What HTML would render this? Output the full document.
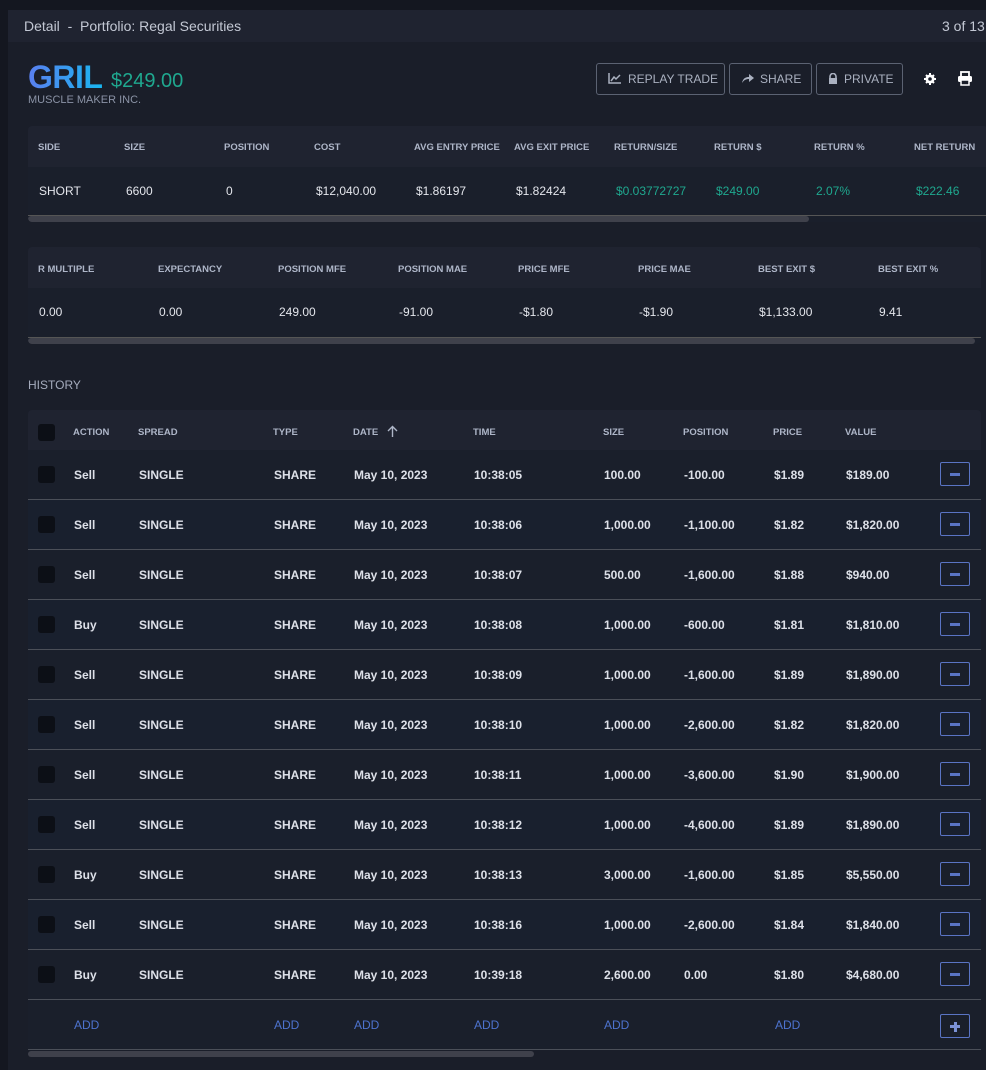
<!DOCTYPE html>
<html><head><meta charset="utf-8"><style>
*{margin:0;padding:0;box-sizing:border-box}
body{width:986px;height:1058px;overflow:hidden;background:#141720;font-family:"Liberation Sans",sans-serif;position:relative;color:#e6e8ee}
.panel{position:absolute;left:8px;top:10px;width:990px;height:1060px;background:#1a1e29}
.hdr{position:absolute;left:8px;top:10px;width:990px;height:32px;background:#1f2330;font-size:14px;color:#c3c8d4}
.a{position:absolute;white-space:nowrap}
.tb{position:absolute;left:28px;background:#1a1f2b;border-radius:4px;overflow:hidden}
.th{position:absolute;left:0;right:0;top:0;background:#1f2330}
.hl{font-size:9.5px;font-weight:bold;color:#aeb6c8}
.v{font-size:12px;color:#e4e6ec}
.g{color:#1fa88f}
.btn{position:absolute;top:63px;height:32px;border:1px solid #5b6272;border-radius:3px;color:#aab1c0;font-size:12px;line-height:30px;padding-left:11px}
.row{position:absolute;left:28px;width:953px;height:50px;border-bottom:1px solid #4b4f58;font-size:12px;font-weight:bold;color:#dde0e8}
.row span{position:absolute;top:18px;white-space:nowrap}
.cb{position:absolute;left:10px;top:16px;width:17px;height:17px;background:#0c0f16;border-radius:3px}
.mb{position:absolute;left:912px;top:12px;width:30px;height:24px;border:1px solid #5a74c4;border-radius:2px}
.mb:after{content:"";position:absolute;left:9px;top:10px;width:10px;height:3px;background:#5a74c4}
.add{color:#4d73cf}
.sb{position:absolute;height:6px;background:#3f414b;border-radius:3px}
</style></head><body>
<div class="panel"></div>
<div class="hdr"><span class="a" style="left:16px;top:8px">Detail &nbsp;- &nbsp;Portfolio: Regal Securities</span><span class="a" style="left:934px;top:8px">3 of 13</span></div>

<div class="a" style="left:28px;top:59px;font-size:32px;font-weight:bold;letter-spacing:-0.5px;background:linear-gradient(90deg,#5a7ff0,#19b6f0);-webkit-background-clip:text;color:transparent">GRIL</div>
<div class="a" style="left:111px;top:70px;font-size:20px;color:#1fa88f">$249.00</div>
<div class="a" style="left:28px;top:94px;font-size:11px;color:#8b93a6">MUSCLE MAKER INC.</div>

<div class="btn" style="left:596px;width:129px"><svg width="14" height="12" style="vertical-align:-1px;margin-right:6px"><path d="M1 1V11H13M3 9L6 5L8 7L12 3" stroke="#aab1c0" stroke-width="1.5" fill="none"/></svg>REPLAY TRADE</div>
<div class="btn" style="left:729px;width:83px"><svg width="13" height="11" style="vertical-align:-1px;margin-right:6px"><path d="M1 10C2 5 5 4 8 4V1L13 5L8 9V6C5 6 3 7 1 10Z" fill="#aab1c0"/></svg>SHARE</div>
<div class="btn" style="left:816px;width:87px"><svg width="10" height="11" style="vertical-align:-1px;margin-right:6px"><path d="M2 5V3.5A3 3 0 0 1 8 3.5V5" stroke="#aab1c0" stroke-width="1.6" fill="none"/><rect x="1" y="5" width="8" height="6" fill="#aab1c0"/></svg>PRIVATE</div>
<svg class="a" style="left:924px;top:73px" width="12" height="12"><circle cx="6" cy="6" r="4.5" fill="#fff"/><path d="M6 0V12M0 6H12M2 2L10 10M10 2L2 10" stroke="#fff" stroke-width="2"/><circle cx="6" cy="6" r="1.8" fill="#1a1e29"/></svg>
<svg class="a" style="left:957px;top:71px" width="16" height="15"><rect x="4" y="1" width="8" height="5" fill="none" stroke="#fff" stroke-width="1.8"/><rect x="1" y="5" width="14" height="6" rx="1.5" fill="#fff"/><rect x="4" y="9" width="8" height="5" fill="#1a1e29" stroke="#fff" stroke-width="1.5"/></svg>

<div class="tb" style="top:126px;width:960px;height:96px">
<div class="th" style="height:41px"></div>
<span class="a hl" style="left:10px;top:16px">SIDE</span><span class="a hl" style="left:96px;top:16px">SIZE</span><span class="a hl" style="left:196px;top:16px">POSITION</span><span class="a hl" style="left:286px;top:16px">COST</span><span class="a hl" style="left:386px;top:16px">AVG ENTRY PRICE</span><span class="a hl" style="left:486px;top:16px">AVG EXIT PRICE</span><span class="a hl" style="left:586px;top:16px">RETURN/SIZE</span><span class="a hl" style="left:686px;top:16px">RETURN $</span><span class="a hl" style="left:786px;top:16px">RETURN %</span><span class="a hl" style="left:886px;top:16px">NET RETURN</span>
<span class="a v" style="left:11px;top:58px">SHORT</span><span class="a v" style="left:98px;top:58px">6600</span><span class="a v" style="left:198px;top:58px">0</span><span class="a v" style="left:288px;top:58px">$12,040.00</span><span class="a v" style="left:388px;top:58px">$1.86197</span><span class="a v" style="left:488px;top:58px">$1.82424</span><span class="a v g" style="left:588px;top:58px">$0.03772727</span><span class="a v g" style="left:688px;top:58px">$249.00</span><span class="a v g" style="left:788px;top:58px">2.07%</span><span class="a v g" style="left:888px;top:58px">$222.46</span>
<div style="position:absolute;left:0;right:0;top:89px;height:1px;background:#555"></div>
<div class="sb" style="left:0;top:90px;width:781px"></div>
</div>

<div class="tb" style="top:247px;width:953px;height:97px">
<div class="th" style="height:41px"></div>
<span class="a hl" style="left:10px;top:17px">R MULTIPLE</span><span class="a hl" style="left:130px;top:17px">EXPECTANCY</span><span class="a hl" style="left:250px;top:17px">POSITION MFE</span><span class="a hl" style="left:370px;top:17px">POSITION MAE</span><span class="a hl" style="left:490px;top:17px">PRICE MFE</span><span class="a hl" style="left:610px;top:17px">PRICE MAE</span><span class="a hl" style="left:730px;top:17px">BEST EXIT $</span><span class="a hl" style="left:850px;top:17px">BEST EXIT %</span>
<span class="a v" style="left:11px;top:58px">0.00</span><span class="a v" style="left:131px;top:58px">0.00</span><span class="a v" style="left:251px;top:58px">249.00</span><span class="a v" style="left:371px;top:58px">-91.00</span><span class="a v" style="left:491px;top:58px">-$1.80</span><span class="a v" style="left:611px;top:58px">-$1.90</span><span class="a v" style="left:731px;top:58px">$1,133.00</span><span class="a v" style="left:851px;top:58px">9.41</span>
<div style="position:absolute;left:0;right:0;top:90px;height:1px;background:#555"></div>
<div class="sb" style="left:0;top:91px;width:947px"></div>
</div>

<div class="a" style="left:28px;top:378px;font-size:12px;color:#a5acbd">HISTORY</div>

<div class="a" style="left:28px;top:410px;width:953px;height:41px;background:#1f2330;border-radius:4px 4px 0 0"></div>
<div class="a" style="left:38px;top:424px;width:17px;height:17px;background:#0c0f16;border-radius:3px"></div>
<span class="a hl" style="left:73px;top:427px">ACTION</span><span class="a hl" style="left:138px;top:427px">SPREAD</span><span class="a hl" style="left:273px;top:427px">TYPE</span><span class="a hl" style="left:353px;top:427px">DATE</span>
<svg class="a" style="left:387px;top:425px" width="11" height="12"><path d="M5.5 12V2M1 6L5.5 1.5L10 6" stroke="#aeb6c8" stroke-width="1.4" fill="none"/></svg>
<span class="a hl" style="left:473px;top:427px">TIME</span><span class="a hl" style="left:603px;top:427px">SIZE</span><span class="a hl" style="left:683px;top:427px">POSITION</span><span class="a hl" style="left:773px;top:427px">PRICE</span><span class="a hl" style="left:845px;top:427px">VALUE</span>

<div class="row" style="top:450px;background:#1a1f2b"><div class="cb"></div><span style="left:46px">Sell</span><span style="left:111px">SINGLE</span><span style="left:246px">SHARE</span><span style="left:326px">May 10, 2023</span><span style="left:446px">10:38:05</span><span style="left:576px">100.00</span><span style="left:656px">-100.00</span><span style="left:746px">$1.89</span><span style="left:818px">$189.00</span><div class="mb"></div></div>
<div class="row" style="top:500px;background:#19202e"><div class="cb"></div><span style="left:46px">Sell</span><span style="left:111px">SINGLE</span><span style="left:246px">SHARE</span><span style="left:326px">May 10, 2023</span><span style="left:446px">10:38:06</span><span style="left:576px">1,000.00</span><span style="left:656px">-1,100.00</span><span style="left:746px">$1.82</span><span style="left:818px">$1,820.00</span><div class="mb"></div></div>
<div class="row" style="top:550px;background:#1a1f2b"><div class="cb"></div><span style="left:46px">Sell</span><span style="left:111px">SINGLE</span><span style="left:246px">SHARE</span><span style="left:326px">May 10, 2023</span><span style="left:446px">10:38:07</span><span style="left:576px">500.00</span><span style="left:656px">-1,600.00</span><span style="left:746px">$1.88</span><span style="left:818px">$940.00</span><div class="mb"></div></div>
<div class="row" style="top:600px;background:#19202e"><div class="cb"></div><span style="left:46px">Buy</span><span style="left:111px">SINGLE</span><span style="left:246px">SHARE</span><span style="left:326px">May 10, 2023</span><span style="left:446px">10:38:08</span><span style="left:576px">1,000.00</span><span style="left:656px">-600.00</span><span style="left:746px">$1.81</span><span style="left:818px">$1,810.00</span><div class="mb"></div></div>
<div class="row" style="top:650px;background:#1a1f2b"><div class="cb"></div><span style="left:46px">Sell</span><span style="left:111px">SINGLE</span><span style="left:246px">SHARE</span><span style="left:326px">May 10, 2023</span><span style="left:446px">10:38:09</span><span style="left:576px">1,000.00</span><span style="left:656px">-1,600.00</span><span style="left:746px">$1.89</span><span style="left:818px">$1,890.00</span><div class="mb"></div></div>
<div class="row" style="top:700px;background:#19202e"><div class="cb"></div><span style="left:46px">Sell</span><span style="left:111px">SINGLE</span><span style="left:246px">SHARE</span><span style="left:326px">May 10, 2023</span><span style="left:446px">10:38:10</span><span style="left:576px">1,000.00</span><span style="left:656px">-2,600.00</span><span style="left:746px">$1.82</span><span style="left:818px">$1,820.00</span><div class="mb"></div></div>
<div class="row" style="top:750px;background:#1a1f2b"><div class="cb"></div><span style="left:46px">Sell</span><span style="left:111px">SINGLE</span><span style="left:246px">SHARE</span><span style="left:326px">May 10, 2023</span><span style="left:446px">10:38:11</span><span style="left:576px">1,000.00</span><span style="left:656px">-3,600.00</span><span style="left:746px">$1.90</span><span style="left:818px">$1,900.00</span><div class="mb"></div></div>
<div class="row" style="top:800px;background:#19202e"><div class="cb"></div><span style="left:46px">Sell</span><span style="left:111px">SINGLE</span><span style="left:246px">SHARE</span><span style="left:326px">May 10, 2023</span><span style="left:446px">10:38:12</span><span style="left:576px">1,000.00</span><span style="left:656px">-4,600.00</span><span style="left:746px">$1.89</span><span style="left:818px">$1,890.00</span><div class="mb"></div></div>
<div class="row" style="top:850px;background:#1a1f2b"><div class="cb"></div><span style="left:46px">Buy</span><span style="left:111px">SINGLE</span><span style="left:246px">SHARE</span><span style="left:326px">May 10, 2023</span><span style="left:446px">10:38:13</span><span style="left:576px">3,000.00</span><span style="left:656px">-1,600.00</span><span style="left:746px">$1.85</span><span style="left:818px">$5,550.00</span><div class="mb"></div></div>
<div class="row" style="top:900px;background:#19202e"><div class="cb"></div><span style="left:46px">Sell</span><span style="left:111px">SINGLE</span><span style="left:246px">SHARE</span><span style="left:326px">May 10, 2023</span><span style="left:446px">10:38:16</span><span style="left:576px">1,000.00</span><span style="left:656px">-2,600.00</span><span style="left:746px">$1.84</span><span style="left:818px">$1,840.00</span><div class="mb"></div></div>
<div class="row" style="top:950px;background:#1a1f2b"><div class="cb"></div><span style="left:46px">Buy</span><span style="left:111px">SINGLE</span><span style="left:246px">SHARE</span><span style="left:326px">May 10, 2023</span><span style="left:446px">10:39:18</span><span style="left:576px">2,600.00</span><span style="left:656px">0.00</span><span style="left:746px">$1.80</span><span style="left:818px">$4,680.00</span><div class="mb"></div></div>
<div class="row" style="top:1000px;background:#1a1f2b;font-weight:normal"><span class="add" style="left:46px">ADD</span><span class="add" style="left:246px">ADD</span><span class="add" style="left:326px">ADD</span><span class="add" style="left:446px">ADD</span><span class="add" style="left:576px">ADD</span><span class="add" style="left:747px">ADD</span>
<div style="position:absolute;left:912px;top:14px;width:30px;height:24px;border:1px solid #5a74c4;border-radius:2px"><div style="position:absolute;left:9px;top:10px;width:10px;height:3px;background:#7c92d6"></div><div style="position:absolute;left:12.5px;top:6.5px;width:3px;height:10px;background:#7c92d6"></div></div></div>
<div class="sb" style="left:28px;top:1051px;width:506px"></div>
</body></html>
